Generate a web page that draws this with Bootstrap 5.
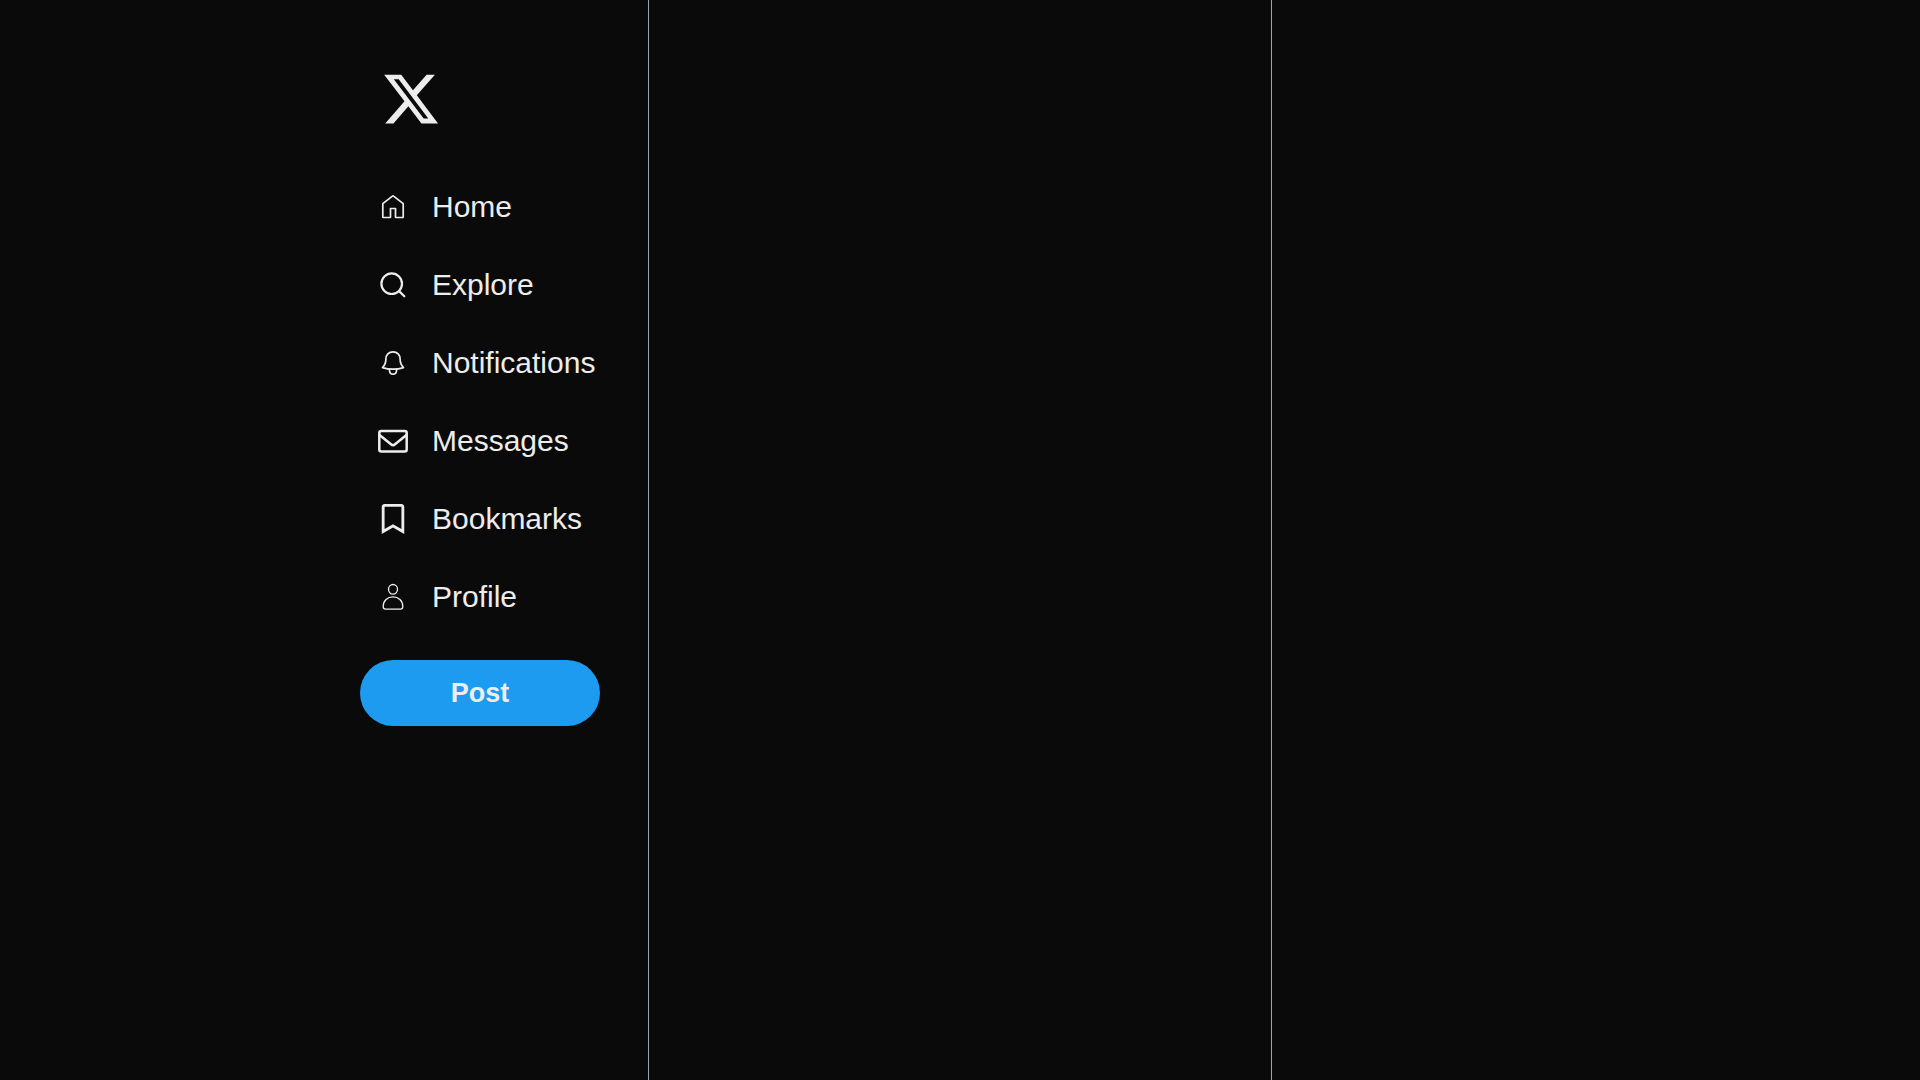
<!DOCTYPE html>
<html lang="en">
<head>
<meta charset="utf-8">
<meta name="viewport" content="width=device-width, initial-scale=1">
<title>Home / X</title>
<link href="https://cdn.jsdelivr.net/npm/bootstrap@5.3.0/dist/css/bootstrap.min.css" rel="stylesheet">
<style>
  body { background: #0a0a0a; color: #ededed; font-family: Arial, "Liberation Sans", sans-serif; }
  .shell { max-width: 1248px; }
  .feed { border-left: 1px solid #9ca3af; border-right: 1px solid #9ca3af; }
  .side { padding: 48px 24px 0; }
  .side svg { display: block; flex: none; }
  .brand-link { padding: 21px; color: inherit; }
  .side-nav { gap: 24px; margin-top: 30px; }
  .side-link { gap: 24px; padding: 12px 18px; font-size: 30px; line-height: 30px; color: #ededed; }
  .side-link:hover { color: #ededed; background: #1f1f1f; }
  .post-btn { width: 240px; max-width: 100%; margin-top: 36px; padding: 12px; border: 0; font-size: 27px; line-height: 42px; background: #1d9bf0; color: #ededed; }
  .post-btn:hover { background: #1a8cd8; color: #ededed; }
</style>
</head>
<body>
<div class="container-fluid shell px-0">
  <div class="row g-0 min-vh-100">
    <header class="col-3 side d-flex flex-column align-items-start">
      <a class="brand-link rounded-circle" href="#" aria-label="X">
        <svg width="60" height="60" viewBox="0 0 512 512" fill="currentColor" aria-hidden="true"><path d="M389.2 48h70.6L305.6 224.2 487 464H345L233.7 318.6 106.5 464H35.8L200.7 275.5 26.8 48H172.4L272.9 180.9 389.2 48zM364.4 421.8h39.1L151.1 88h-42L364.4 421.8z"/></svg>
      </a>
      <nav class="nav flex-column align-items-start side-nav" aria-label="Primary">
        <a class="nav-link side-link d-flex align-items-center rounded-pill" href="#">
          <svg width="30" height="30" viewBox="0 0 30 30" fill="none" stroke="currentColor" stroke-width="1.7" stroke-linejoin="round" aria-hidden="true"><path d="M4.8 11.6 14.4 4.1Q15 3.6 15.6 4.1L25.2 11.6V25Q25.200 25.500 24.700 25.500H18Q17.500 25.500 17.500 25V16.500H12.500V25Q12.500 25.500 12 25.500H5.300Q4.800 25.500 4.800 25Z"/></svg>
          <span>Home</span>
        </a>
        <a class="nav-link side-link d-flex align-items-center rounded-pill" href="#">
          <svg width="30" height="30" viewBox="0 0 30 30" fill="none" stroke="currentColor" stroke-width="2.2" stroke-linecap="round" aria-hidden="true"><circle cx="13.700" cy="13.700" r="10.300"/><path d="m21.100 21.100 5.200 5.200"/></svg>
          <span>Explore</span>
        </a>
        <a class="nav-link side-link d-flex align-items-center rounded-pill" href="#">
          <svg width="30" height="30" viewBox="0 0 30 30" fill="none" stroke="currentColor" stroke-width="1.7" stroke-linecap="round" stroke-linejoin="round" aria-hidden="true"><path d="M15 3.800C10.700 3.800 7.900 7 7.900 11C7.900 15 7.300 16.800 4.500 19.600C7.500 20.600 11 21.200 15 21.200S22.500 20.600 25.500 19.600C22.700 16.800 22.100 15 22.100 11C22.100 7 19.300 3.800 15 3.800Z"/><path d="M11.400 21.400C11.400 24.400 12.800 26.200 15 26.200S18.600 24.400 18.600 21.400"/></svg>
          <span>Notifications</span>
        </a>
        <a class="nav-link side-link d-flex align-items-center rounded-pill" href="#">
          <svg width="30" height="30" viewBox="0 0 30 30" fill="none" stroke="currentColor" stroke-width="2.500" stroke-linejoin="round" aria-hidden="true"><rect x="1.300" y="5" width="27.400" height="20.500" rx="2"/><path d="M1.500 9 13 18.300Q15 20 17 18.300L28.500 9"/></svg>
          <span>Messages</span>
        </a>
        <a class="nav-link side-link d-flex align-items-center rounded-pill" href="#">
          <svg width="30" height="30" viewBox="0 0 384 512" fill="currentColor" aria-hidden="true"><path d="M336 0H48C21.490 0 0 21.490 0 48v464l192-112 192 112V48c0-26.510-21.490-48-48-48zm0 428.430l-144-84-144 84V54a6 6 0 0 1 6-6h276c3.314 0 6 2.683 6 5.996V428.430z"/></svg>
          <span>Bookmarks</span>
        </a>
        <a class="nav-link side-link d-flex align-items-center rounded-pill" href="#">
          <svg width="30" height="30" viewBox="0 0 30 30" fill="none" stroke="currentColor" stroke-width="1.300" aria-hidden="true"><ellipse cx="15" cy="7.300" rx="4.500" ry="4.800"/><path d="M7.500 27.200H22.500Q24.800 27.200 24.800 24.600C24.800 18.700 20.500 14.900 15 14.900S5.200 18.700 5.200 24.600Q5.200 27.200 7.500 27.200Z"/></svg>
          <span>Profile</span>
        </a>
      </nav>
      <button type="button" class="btn post-btn rounded-pill fw-bold">Post</button>
    </header>
    <main class="col-6 feed"></main>
    <aside class="col-3"></aside>
  </div>
</div>
<script src="https://cdn.jsdelivr.net/npm/bootstrap@5.3.0/dist/js/bootstrap.bundle.min.js"></script>
</body>
</html>
